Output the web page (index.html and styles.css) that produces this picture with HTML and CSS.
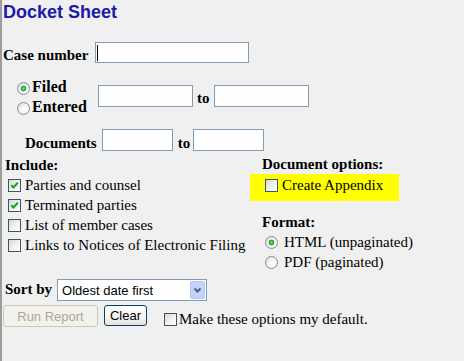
FILE: index.html
```html
<!DOCTYPE html>
<html>
<head>
<meta charset="utf-8">
<title>Docket Sheet</title>
<link rel="stylesheet" href="styles.css">
</head>
<body>
<div class="page">
  <h1 class="title">Docket Sheet</h1>

  <div class="row case-row">
    <label class="lbl case-lbl" for="case">Case number</label>
    <input class="txt case-input" id="case" type="text">
  </div>

  <div class="row date-row">
    <div class="date-type">
      <label class="opt"><input type="radio" class="radio" name="dt" checked>Filed</label>
      <label class="opt"><input type="radio" class="radio" name="dt">Entered</label>
    </div>
    <input class="txt date-input" type="text">
    <span class="to date-to">to</span>
    <input class="txt date-input" type="text">
  </div>

  <div class="row doc-row">
    <span class="lbl doc-lbl">Documents</span>
    <input class="txt doc-input" type="text">
    <span class="to doc-to">to</span>
    <input class="txt doc-input" type="text">
  </div>

  <div class="options">
    <div class="include">
      <div class="head">Include:</div>
      <label class="check-line"><input type="checkbox" class="check" checked>Parties and counsel</label>
      <label class="check-line"><input type="checkbox" class="check" checked>Terminated parties</label>
      <label class="check-line"><input type="checkbox" class="check">List of member cases</label>
      <label class="check-line"><input type="checkbox" class="check">Links to Notices of Electronic Filing</label>
    </div>
    <div class="docopts">
      <div class="head head-r docopt-head">Document options:</div>
      <div class="highlight">
        <label class="check-line"><input type="checkbox" class="check">Create Appendix</label>
      </div>
      <div class="head head-r format-head">Format:</div>
      <label class="radio-line"><input type="radio" class="radio" name="fmt" checked>HTML (unpaginated)</label>
      <label class="radio-line"><input type="radio" class="radio" name="fmt">PDF (paginated)</label>
    </div>
  </div>

  <div class="row sort-row">
    <span class="lbl sort-lbl">Sort by</span>
    <select class="sel"><option>Oldest date first</option></select>
  </div>

  <div class="row action-row">
    <button class="btn btn-disabled" type="button" disabled>Run Report</button>
    <button class="btn btn-clear" type="button">Clear</button>
    <label class="check-line default-line"><input type="checkbox" class="check">Make these options my default.</label>
  </div>
</div>
</body>
</html>
```
FILE: styles.css
```css
* { box-sizing: border-box; }

html, body {
  margin: 0;
  padding: 0;
  background: #ffffff;
}

body {
  font-family: "Liberation Serif", "Times New Roman", serif;
  font-size: 15px;
  color: #000;
}

.page {
  width: 464px;
  height: 361px;
  background: #f0f0f0;
  border-left: 2px solid #9d9d9d;
  padding-left: 1px;
  overflow: hidden;
}

.title {
  margin: 0;
  padding-top: 2px;
  font: bold 18px/20px "Liberation Sans", Arial, sans-serif;
  color: #1a1aa8;
}

.row {
  display: flex;
  align-items: flex-start;
}

.lbl, .to, .head {
  font-weight: bold;
  line-height: 20px;
}

.txt {
  height: 21px;
  border: 1px solid #7f9db9;
  background: #fff;
  padding: 0 2px;
  margin: 0;
  font: 13px "Liberation Sans", Arial, sans-serif;
  outline: none;
}

/* case number */
.case-row { margin-top: 20px; }
.case-lbl { width: 92px; padding-top: 3px; }
.case-input {
  width: 154px;
  background: linear-gradient(#000, #000) no-repeat 1px 2px / 1px 16px, #fff;
}

/* filed / entered */
.date-row { margin-top: 12px; }
.date-type {
  width: 95px;
  padding-left: 14px;
}
.opt {
  display: flex;
  align-items: center;
  height: 20px;
  font-weight: bold;
  font-size: 16px;
}
.opt .radio { margin: 2px 2px 0 0; }
.date-input { width: 95px; height: 22px; margin-top: 8px; }
.date-to { margin: 11px 4px 0 4px; }

/* documents */
.doc-row { margin-top: 12px; }
.doc-lbl { margin: 4px 5px 0 22px; }
.doc-input { width: 71px; height: 22px; }
.doc-to { margin: 4px 3px 0 5px; }

/* options grid */
.options {
  margin-top: 2px;
  display: grid;
  grid-template-columns: 247px 1fr;
}
.include .head { padding-left: 2px; }
.include .check-line { padding-left: 5px; }

.check-line {
  display: flex;
  align-items: center;
  height: 20px;
}

.check {
  -webkit-appearance: none;
  appearance: none;
  width: 13px;
  height: 13px;
  margin: 1px 4px 0 0;
  border: 1px solid #3d5368;
  border-radius: 0;
  background: linear-gradient(135deg, #d9d9d3 0%, #f4f4f1 60%, #ffffff 100%);
  flex: none;
}
.check:checked {
  background:
    url("data:image/svg+xml,%3Csvg xmlns='http://www.w3.org/2000/svg' width='11' height='11'%3E%3Cpath d='M2.3 5.2 L4.4 7.4 L8.8 2.8' fill='none' stroke='%2321a121' stroke-width='2.2'/%3E%3C/svg%3E") no-repeat 0 0 / 11px 11px,
    linear-gradient(135deg, #d9d9d3 0%, #f4f4f1 60%, #ffffff 100%);
}

.radio {
  -webkit-appearance: none;
  appearance: none;
  width: 13px;
  height: 13px;
  border: 1px solid #7a8fa8;
  border-radius: 50%;
  background: radial-gradient(circle at 65% 65%, #ffffff 0%, #f2f2ee 50%, #d6d6d0 100%);
  flex: none;
}
.radio:checked {
  background:
    radial-gradient(circle at 50% 50%, #8ee68e 0px, #3cb43c 1.6px, #2a9a2a 2.6px, rgba(42,154,42,0) 3.2px),
    radial-gradient(circle at 65% 65%, #ffffff 0%, #f2f2ee 50%, #d6d6d0 100%);
}

.docopts .head-r { padding-left: 12px; }
.docopt-head { line-height: 19px; }
.highlight {
  width: 149px;
  background: #ffff00;
  padding: 1px 0 6px 15px;
}
.format-head { margin-top: 12px; line-height: 19px; }
.radio-line {
  display: flex;
  align-items: center;
  height: 20px;
  padding-left: 15px;
}
.radio-line .radio { margin: 1px 6px 0 0; }

/* sort by */
.sort-row { margin-top: 7px; }
.sort-lbl { margin: 0 5px 0 2px; }
.sel {
  -webkit-appearance: none;
  appearance: none;
  width: 150px;
  height: 22px;
  margin: 0;
  border: 1px solid #7f9db9;
  border-radius: 0;
  padding: 0 20px 0 4px;
  font: 13px "Liberation Sans", Arial, sans-serif;
  color: #000;
  background:
    url("data:image/svg+xml,%3Csvg xmlns='http://www.w3.org/2000/svg' width='15' height='18'%3E%3Crect x='0.5' y='0.5' width='14' height='17' rx='1.5' fill='%23c3d3fc' stroke='%23b4c6f6'/%3E%3Cpath d='M4.5 7.5 L7.5 10.5 L10.5 7.5' fill='none' stroke='%234d6185' stroke-width='2'/%3E%3C/svg%3E") no-repeat right 1px center / 15px 18px,
    #fff;
  outline: none;
}

/* actions */
.action-row { margin-top: 4px; align-items: flex-start; }
.btn {
  font: 13px "Liberation Sans", Arial, sans-serif;
  border-radius: 3px;
  padding: 0;
  margin: 0;
}
.btn-disabled {
  width: 95px;
  height: 22px;
  border: 1px solid #cbc9bf;
  background: #f2f1ec;
  color: #aca899;
}
.btn-clear {
  width: 43px;
  height: 21px;
  margin-left: 6px;
  border: 1px solid #0b3f72;
  background: linear-gradient(#ffffff 0%, #f4f4f1 60%, #e3e2dc 100%);
  color: #000;
}
.default-line {
  margin: 4px 0 0 17px;
}
.default-line .check { margin-right: 2px; }
```
